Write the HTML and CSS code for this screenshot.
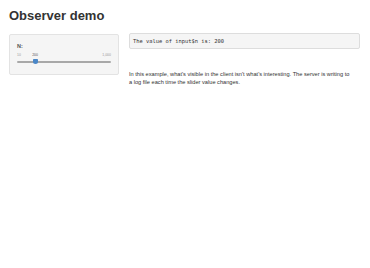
FILE: index.html
```html
<!DOCTYPE html>
<html lang="en">
<head>
    <meta charset="UTF-8">
    <meta name="viewport" content="width=device-width, initial-scale=1.0">
    <title>Observer demo</title>
    <link rel="stylesheet" href="styles.css">
</head>
<body>
    <div class="container">
        <h2 class="title">Observer demo</h2>
        <div class="row">
            <div class="sidebar">
                <div class="well">
                    <label class="control-label" for="n">N:</label>
                    <div class="slider">
                        <div class="slider-labels">
                            <span>10</span>
                            <span>1,000</span>
                        </div>
                        <span class="slider-value" style="left: 19.2%">200</span>
                        <div class="slider-track">
                            <span class="slider-handle" style="left: 19.2%"></span>
                        </div>
                    </div>
                </div>
            </div>
            <div class="main">
                <pre class="output">The value of input$n is: 200</pre>
                <p class="note">In this example, what's visible in the client isn't what's interesting. The server is writing to a log file each time the slider value changes.</p>
            </div>
        </div>
    </div>
</body>
</html>
```
FILE: styles.css
```css
body {
    font-family: "Liberation Sans", Arial, sans-serif;
    margin: 0;
    padding: 0;
    background-color: #ffffff;
    color: #333333;
}
.container {
    padding: 0 9px;
}
.title {
    font-size: 13px;
    font-weight: bold;
    line-height: 14px;
    margin: 9px 0 10px 0;
}
.row {
    display: grid;
    grid-template-columns: 110px 231px;
    gap: 10px;
}
.well {
    margin-top: 1px;
    height: 41px;
    box-sizing: border-box;
    padding: 8px 7px 0 7px;
    background-color: #f5f5f5;
    border: 1px solid #e3e3e3;
    border-radius: 2px;
}
.control-label {
    display: block;
    font-size: 5.5px;
    line-height: 6px;
    font-weight: bold;
    color: #555555;
}
.slider {
    position: relative;
    margin-top: 4px;
    height: 14px;
}
.slider-labels {
    display: flex;
    justify-content: space-between;
    font-size: 3.5px;
    line-height: 4px;
    color: #999999;
}
.slider-value {
    position: absolute;
    top: 0;
    transform: translateX(-50%);
    font-size: 3.5px;
    line-height: 4px;
    color: #555555;
}
.slider-track {
    position: relative;
    margin-top: 4px;
    height: 2px;
    background-color: #a8a8a8;
    border-radius: 1px;
}
.slider-handle {
    position: absolute;
    top: -2px;
    width: 5px;
    height: 5px;
    margin-left: -2.5px;
    background-color: #4a87c8;
    border-radius: 1px 1px 3px 3px;
}
.output {
    margin: 0;
    height: 16px;
    box-sizing: border-box;
    padding: 4px 3px;
    font-family: "DejaVu Sans Mono", "Liberation Mono", monospace;
    font-size: 5.4px;
    line-height: 7px;
    background-color: #f5f5f5;
    border: 1px solid #dddddd;
    border-radius: 2px;
    color: #333333;
}
.note {
    margin: 21px 0 0 0;
    padding-right: 6px;
    font-size: 5.65px;
    line-height: 8.2px;
}
```
